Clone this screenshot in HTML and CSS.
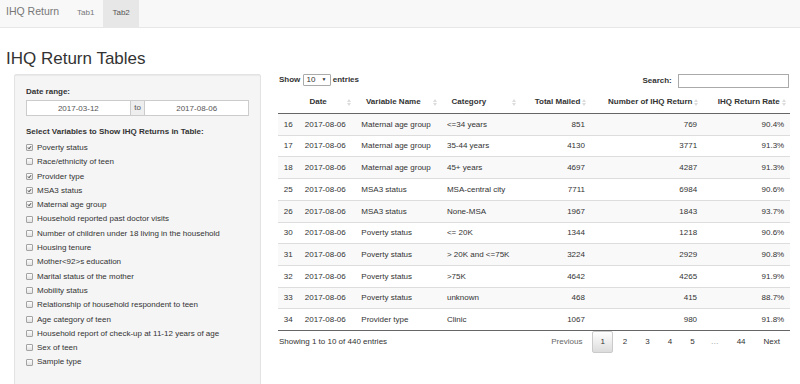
FILE: index.html
```html
<!DOCTYPE html>
<html lang="en">
  <head>
    <meta charset="UTF-8" />
    <title>IHQ Return</title>
    <link rel="stylesheet" href="styles.css">
  </head>
  <body>
    <nav class="navbar">
      <span class="brand">IHQ Return</span>
      <a class="tab">Tab1</a>
      <a class="tab active">Tab2</a>
    </nav>
    <div class="page">
      <h2 class="title">IHQ Return Tables</h2>
      <div class="row">
        <div class="well">
          <div class="form-group">
            <label class="control-label">Date range:</label>
            <div class="daterange">
              <input type="text" value="2017-03-12" />
              <span class="addon">to</span>
              <input type="text" value="2017-08-06" />
            </div>
          </div>
          <div class="form-group">
            <label class="control-label">Select Variables to Show IHQ Returns in Table:</label>
            <div class="checks">
              <label class="check"><span class="box"><svg viewBox="0 0 8 8"><path d="M1.6 4.1 L3.3 5.9 L6.4 2"/></svg></span>Poverty status</label>
              <label class="check"><span class="box"></span>Race/ethnicity of teen</label>
              <label class="check"><span class="box"><svg viewBox="0 0 8 8"><path d="M1.6 4.1 L3.3 5.9 L6.4 2"/></svg></span>Provider type</label>
              <label class="check"><span class="box"><svg viewBox="0 0 8 8"><path d="M1.6 4.1 L3.3 5.9 L6.4 2"/></svg></span>MSA3 status</label>
              <label class="check"><span class="box"><svg viewBox="0 0 8 8"><path d="M1.6 4.1 L3.3 5.9 L6.4 2"/></svg></span>Maternal age group</label>
              <label class="check"><span class="box"></span>Household reported past doctor visits</label>
              <label class="check"><span class="box"></span>Number of children under 18 living in the household</label>
              <label class="check"><span class="box"></span>Housing tenure</label>
              <label class="check"><span class="box"></span>Mother&lt;92&gt;s education</label>
              <label class="check"><span class="box"></span>Marital status of the mother</label>
              <label class="check"><span class="box"></span>Mobility status</label>
              <label class="check"><span class="box"></span>Relationship of household respondent to teen</label>
              <label class="check"><span class="box"></span>Age category of teen</label>
              <label class="check"><span class="box"></span>Household report of check-up at 11-12 years of age</label>
              <label class="check"><span class="box"></span>Sex of teen</label>
              <label class="check"><span class="box"></span>Sample type</label>
            </div>
          </div>
        </div>

        <div class="main">
          <div class="dt-top">
            <label>Show <span class="select">10 <span class="caret">&#9660;</span></span> entries</label>
            <label>Search: <input type="search" class="search" /></label>
          </div>
          <table class="dt">
            <colgroup>
              <col style="width: 21px" />
              <col style="width: 56.5px" />
              <col style="width: 85.5px" />
              <col style="width: 79px" />
              <col style="width: 70.5px" />
              <col style="width: 112px" />
              <col style="width: 87px" />
            </colgroup>
            <thead>
              <tr>
                <th></th>
                <th class="sorting">Date</th>
                <th class="sorting">Variable Name</th>
                <th class="sorting">Category</th>
                <th class="sorting num">Total Mailed</th>
                <th class="sorting num">Number of IHQ Return</th>
                <th class="sorting num">IHQ Return Rate</th>
              </tr>
            </thead>
            <tbody>
              <tr><td>16</td><td>2017-08-06</td><td>Maternal age group</td><td>&lt;=34 years</td><td class="num">851</td><td class="num">769</td><td class="num">90.4%</td></tr>
              <tr><td>17</td><td>2017-08-06</td><td>Maternal age group</td><td>35-44 years</td><td class="num">4130</td><td class="num">3771</td><td class="num">91.3%</td></tr>
              <tr><td>18</td><td>2017-08-06</td><td>Maternal age group</td><td>45+ years</td><td class="num">4697</td><td class="num">4287</td><td class="num">91.3%</td></tr>
              <tr><td>25</td><td>2017-08-06</td><td>MSA3 status</td><td>MSA-central city</td><td class="num">7711</td><td class="num">6984</td><td class="num">90.6%</td></tr>
              <tr><td>26</td><td>2017-08-06</td><td>MSA3 status</td><td>None-MSA</td><td class="num">1967</td><td class="num">1843</td><td class="num">93.7%</td></tr>
              <tr><td>30</td><td>2017-08-06</td><td>Poverty status</td><td>&lt;= 20K</td><td class="num">1344</td><td class="num">1218</td><td class="num">90.6%</td></tr>
              <tr><td>31</td><td>2017-08-06</td><td>Poverty status</td><td>&gt; 20K and &lt;=75K</td><td class="num">3224</td><td class="num">2929</td><td class="num">90.8%</td></tr>
              <tr><td>32</td><td>2017-08-06</td><td>Poverty status</td><td>&gt;75K</td><td class="num">4642</td><td class="num">4265</td><td class="num">91.9%</td></tr>
              <tr><td>33</td><td>2017-08-06</td><td>Poverty status</td><td>unknown</td><td class="num">468</td><td class="num">415</td><td class="num">88.7%</td></tr>
              <tr><td>34</td><td>2017-08-06</td><td>Provider type</td><td>Clinic</td><td class="num">1067</td><td class="num">980</td><td class="num">91.8%</td></tr>
            </tbody>
          </table>
          <div class="dt-bottom">
            <div class="info">Showing 1 to 10 of 440 entries</div>
            <div class="paginate">
              <a class="pg disabled">Previous</a>
              <a class="pg current">1</a>
              <a class="pg">2</a>
              <a class="pg">3</a>
              <a class="pg">4</a>
              <a class="pg">5</a>
              <span class="ellipsis">&hellip;</span>
              <a class="pg">44</a>
              <a class="pg">Next</a>
            </div>
          </div>
        </div>
      </div>
    </div>
  </body>
</html>
```

FILE: styles.css
```css
* {
  box-sizing: border-box;
}
html,
body {
  margin: 0;
}
body {
  font-family: "Liberation Sans", Arial, sans-serif;
  font-size: 8px;
  line-height: 11.4px;
  color: #333;
  background-color: #fff;
  overflow: hidden;
}

/* navbar */
.navbar {
  display: flex;
  height: 28px;
  background-color: #f8f8f8;
  border-bottom: 1px solid #e7e7e7;
}
.brand {
  display: flex;
  align-items: center;
  padding: 0 9px 3px 6px;
  font-size: 10.5px;
  color: #777;
}
.tab {
  display: flex;
  align-items: center;
  padding: 0 9px 2px;
  color: #777;
}
.tab.active {
  background-color: #e7e7e7;
  color: #555;
}

/* page */
.title {
  margin: 22px 0 5px 6px;
  font-size: 17px;
  font-weight: normal;
  line-height: 18.7px;
  color: #333;
}
.row {
  display: grid;
  grid-template-columns: 247px 512px;
  column-gap: 17px;
  padding-left: 14px;
}

/* sidebar */
.well {
  background-color: #f5f5f5;
  border: 1px solid #e3e3e3;
  border-radius: 2px;
  box-shadow: inset 0 1px 1px rgba(0, 0, 0, 0.05);
  padding: 11px;
  min-height: 330px;
}
.form-group {
  margin-bottom: 10px;
}
.control-label {
  display: block;
  font-weight: bold;
  margin-bottom: 3px;
}
.daterange {
  display: flex;
  height: 16px;
}
.daterange input {
  flex: 1;
  min-width: 0;
  border: 1px solid #ccc;
  background-color: #fff;
  padding: 0;
  font-family: inherit;
  font-size: 8px;
  color: #555;
  text-align: center;
}
.addon {
  display: flex;
  align-items: center;
  padding: 0 3.5px;
  border-top: 1px solid #ccc;
  border-bottom: 1px solid #ccc;
  background-color: #eee;
  color: #555;
}
.check {
  display: flex;
  align-items: center;
  height: 14.3px;
}
.box {
  width: 7px;
  height: 7px;
  margin-right: 4px;
  border: 1px solid #a3a3a3;
  border-radius: 1px;
  background: linear-gradient(#fcfcfc, #e2e2e2);
  display: flex;
}
.box svg {
  width: 100%;
  height: 100%;
  fill: none;
  stroke: #222;
  stroke-width: 1.5;
}

/* table */
.dt-top {
  display: flex;
  justify-content: space-between;
  align-items: flex-start;
  height: 17px;
  padding-left: 1px;
}
.dt-top label {
  font-weight: bold;
  display: flex;
  align-items: center;
  white-space: pre;
}
.dt-top label:first-child {
  height: 12px;
}
.select {
  display: inline-flex;
  align-items: center;
  justify-content: space-between;
  width: 28px;
  height: 12px;
  padding: 0 3px;
  border: 1px solid #aaa;
  border-radius: 1px;
  background-color: #fff;
  font-weight: normal;
}
.caret {
  font-size: 5px;
}
.search {
  width: 111px;
  height: 14px;
  margin: 0 1px 0 4px;
  border: 1px solid #aaa;
  padding: 0 2px;
  font-size: 8px;
}
.dt {
  width: 512px;
  table-layout: fixed;
  border-collapse: collapse;
}
.dt th {
  position: relative;
  padding: 5.5px 10.4px;
  text-align: left;
  font-weight: bold;
  white-space: nowrap;
  border-bottom: 1px solid #666;
}
.dt th.num,
.dt td.num {
  text-align: right;
}
.dt th.sorting::before,
.dt th.sorting::after {
  content: "";
  position: absolute;
  right: 4.5px;
  border-left: 2px solid transparent;
  border-right: 2px solid transparent;
}
.dt th.sorting::before {
  top: 8.5px;
  border-bottom: 3px solid #dcdcdc;
}
.dt th.sorting::after {
  top: 12.5px;
  border-top: 3px solid #dcdcdc;
}
.dt td {
  padding: 4.65px 5.8px;
  white-space: nowrap;
  border-bottom: 1px solid #ddd;
}
.dt tbody tr:nth-child(odd) {
  background-color: #f9f9f9;
}
.dt tbody tr:last-child td {
  border-bottom: 1px solid #666;
}
.dt-bottom {
  display: flex;
  justify-content: space-between;
  align-items: center;
  height: 22px;
  padding-left: 1px;
}
.paginate {
  display: flex;
  align-items: center;
  padding-right: 2px;
}
.pg {
  padding: 4px 7px;
  margin-left: 2px;
  border: 1px solid transparent;
  border-radius: 2px;
  color: #333;
}
.pg.disabled {
  color: #666;
}
.pg.current {
  border-color: #cacaca;
  background: linear-gradient(#fff, #dcdcdc);
}
.ellipsis {
  padding: 0 8px;
  color: #888;
}
```
